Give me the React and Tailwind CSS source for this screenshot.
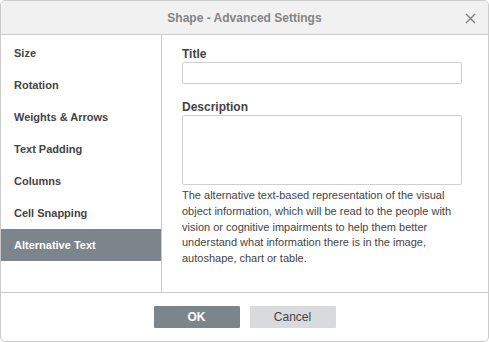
import { useState } from "react";

const tabs = [
  "Size",
  "Rotation",
  "Weights & Arrows",
  "Text Padding",
  "Columns",
  "Cell Snapping",
  "Alternative Text",
];

const App = () => {
  const [active, setActive] = useState("Alternative Text");

  return (
    <div
      className="w-[489px] h-[342px] flex flex-col bg-white border border-[#cbcbcb] rounded-[5px] overflow-hidden text-[#444]"
      style={{ fontFamily: '"Liberation Sans", Arial, sans-serif' }}
    >
      <div className="h-[34px] shrink-0 relative flex items-center justify-center bg-[#f1f1f1] border-b border-[#cbcbcb]">
        <span className="text-[12px] font-bold text-[#848484]">
          Shape - Advanced Settings
        </span>
        <button className="absolute right-[12px] top-[11px] w-[12px] h-[12px] flex items-center justify-center">
          <svg width="11" height="11" viewBox="0 0 11 11">
            <path
              d="M1 1 L10 10 M10 1 L1 10"
              stroke="#808080"
              strokeWidth="1.4"
              fill="none"
            />
          </svg>
        </button>
      </div>

      <div className="h-[258px] shrink-0 flex border-b border-[#cbcbcb]">
        <div className="w-[161px] shrink-0 pt-[2px] border-r border-[#cbcbcb]">
          {tabs.map((t) => (
            <button
              key={t}
              onClick={() => setActive(t)}
              className={`w-full h-[32px] flex items-center pl-[13px] text-[11px] font-bold text-left ${
                active === t ? "bg-[#7d858c] text-white" : "text-[#444]"
              }`}
            >
              {t}
            </button>
          ))}
        </div>

        <div className="flex-1 pl-[20px] pt-[12px]">
          <label className="block text-[12px] font-bold leading-[14px] mb-[1px]">
            Title
          </label>
          <input className="block w-[280px] h-[22px] border border-[#cfcfcf] rounded-[2px] outline-none px-1 text-[11px]" />
          <label className="block text-[12px] font-bold leading-[14px] mt-[16px] mb-[1px]">
            Description
          </label>
          <textarea className="block w-[280px] h-[70px] border border-[#cfcfcf] rounded-[2px] outline-none resize-none px-1 text-[11px]" />
          <p className="w-[282px] mt-[3px] text-[11px] leading-[15.75px] text-[#444]">
            The alternative text-based representation of the visual object
            information, which will be read to the people with vision or
            cognitive impairments to help them better understand what
            information there is in the image, autoshape, chart or table.
          </p>
        </div>
      </div>

      <div className="flex-1 flex items-center justify-center gap-[10px] pb-[1px]">
        <button className="w-[86px] h-[22px] bg-[#7d858c] text-white text-[12px] font-bold rounded-[1px]">
          OK
        </button>
        <button className="w-[86px] h-[22px] bg-[#d8dadc] text-[#444] text-[12px] rounded-[1px]">
          Cancel
        </button>
      </div>
    </div>
  );
};

export default App;
